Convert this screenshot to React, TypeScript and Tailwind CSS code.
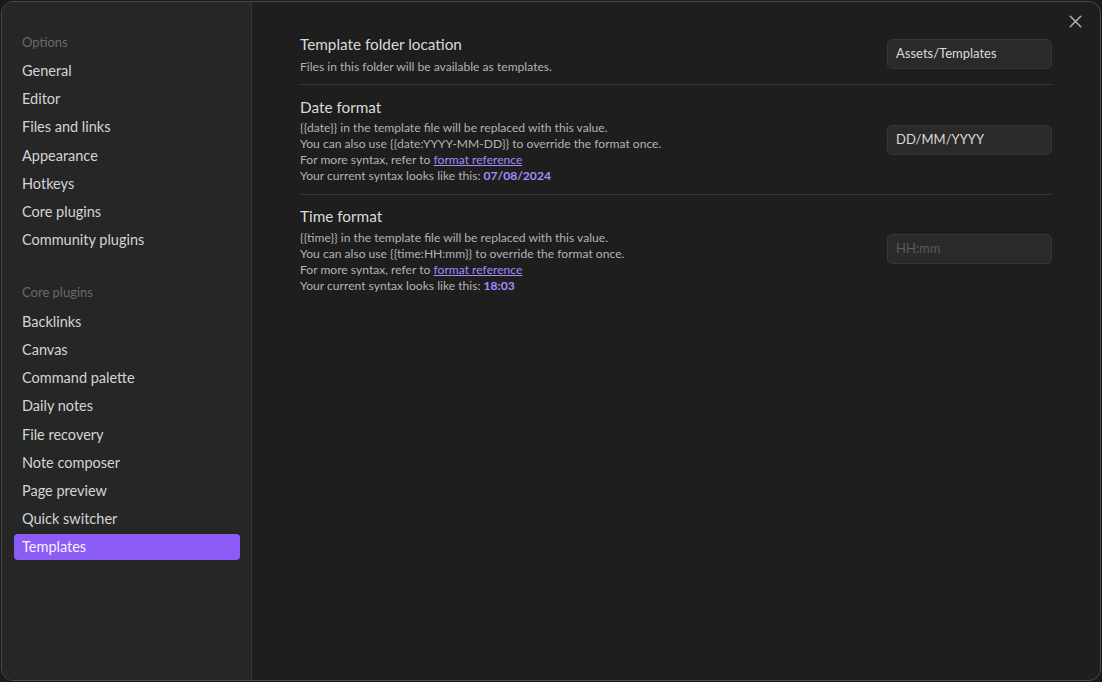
import React from "react";
import { X } from "lucide-react";

const optionItems = ["General", "Editor", "Files and links", "Appearance", "Hotkeys", "Core plugins", "Community plugins"];
const pluginItems = ["Backlinks", "Canvas", "Command palette", "Daily notes", "File recovery", "Note composer", "Page preview", "Quick switcher", "Templates"];

function NavItem({ label, active }: { label: string; active?: boolean }) {
  return (
    <div
      className={
        active
          ? "h-[26px] mb-[2.15px] px-2 flex items-center rounded-[4px] bg-[#8b5cf6] text-[#f4f0ff] text-[14.5px]"
          : "h-[26px] mb-[2.15px] px-2 flex items-center rounded-[4px] text-[#d4d4d4] text-[14.5px]"
      }
    >
      {label}
    </div>
  );
}

function Setting({
  title,
  lines,
  value,
  placeholder,
  className,
  descClass,
}: {
  title: string;
  lines: React.ReactNode[];
  value?: string;
  placeholder?: string;
  className: string;
  descClass: string;
}) {
  return (
    <div className={className + " flex items-center"}>
      <div className="flex-1 flex flex-col">
        <div className="text-[15.3px] leading-[20px] text-[#dadada]">{title}</div>
        <div className={descClass + " text-[12.1px] leading-[16px] text-[#b3b3b3]"}>
          {lines.map((l, i) => (
            <div key={i}>{l}</div>
          ))}
        </div>
      </div>
      <div
        className={
          "-mt-[2px] w-[165px] h-[30px] rounded-[5px] border border-[#363636] bg-[#2a2a2a] px-2 flex items-center text-[13px] " +
          (value ? "text-[#dadada]" : "text-[#5c5c5c]")
        }
      >
        {value ?? placeholder}
      </div>
    </div>
  );
}

const Link = () => <span className="text-[#a68af9] underline">format reference</span>;

export default function App() {
  return (
    <div
      className="w-[1102px] h-[682px] bg-[#1a1a1a] p-px"
      style={{ fontFamily: 'Lato, "Noto Sans", sans-serif' }}
    >
      <div className="relative h-full w-full rounded-[12px] border border-[#4a4a4a] bg-[#1e1e1e] flex overflow-hidden">
        <div className="w-[250px] shrink-0 bg-[#262626] border-r border-[#363636] pl-[12px] pr-[11px] pt-[31px]">
          <div className="px-2 h-[20px] flex items-center text-[13px] text-[#6a6a6a] mb-[5px]">Options</div>
          {optionItems.map((l) => (
            <NavItem key={l} label={l} />
          ))}
          <div className="px-2 mt-[30px] h-[20px] flex items-center text-[13px] text-[#6a6a6a] mb-[6px]">Core plugins</div>
          {pluginItems.map((l) => (
            <NavItem key={l} label={l} active={l === "Templates"} />
          ))}
        </div>
        <div className="flex-1 pl-[48px] pr-[48px] pt-[32px]">
          <Setting
            className="pt-0 pb-[9px] border-b border-[#363636]"
            descClass="mt-[5px]"
            title="Template folder location"
            lines={["Files in this folder will be available as templates."]}
            value="Assets/Templates"
          />
          <Setting
            className="pt-[12px] pb-[10px] border-b border-[#363636]"
            descClass="mt-[3px]"
            title="Date format"
            lines={[
              "{{date}} in the template file will be replaced with this value.",
              "You can also use {{date:YYYY-MM-DD}} to override the format once.",
              <>For more syntax, refer to <Link /></>,
              <>Your current syntax looks like this: <span className="font-bold text-[#a68af9]">07/08/2024</span></>,
            ]}
            value="DD/MM/YYYY"
          />
          <Setting
            className="pt-[11px] pb-[12px]"
            descClass="mt-[4px]"
            title="Time format"
            lines={[
              "{{time}} in the template file will be replaced with this value.",
              "You can also use {{time:HH:mm}} to override the format once.",
              <>For more syntax, refer to <Link /></>,
              <>Your current syntax looks like this: <span className="font-bold text-[#a68af9]">18:03</span></>,
            ]}
            placeholder="HH:mm"
          />
        </div>
        <div className="absolute right-[14px] top-[9px] text-[#b0b0b0]">
          <X size={21} strokeWidth={1.7} />
        </div>
      </div>
    </div>
  );
}
